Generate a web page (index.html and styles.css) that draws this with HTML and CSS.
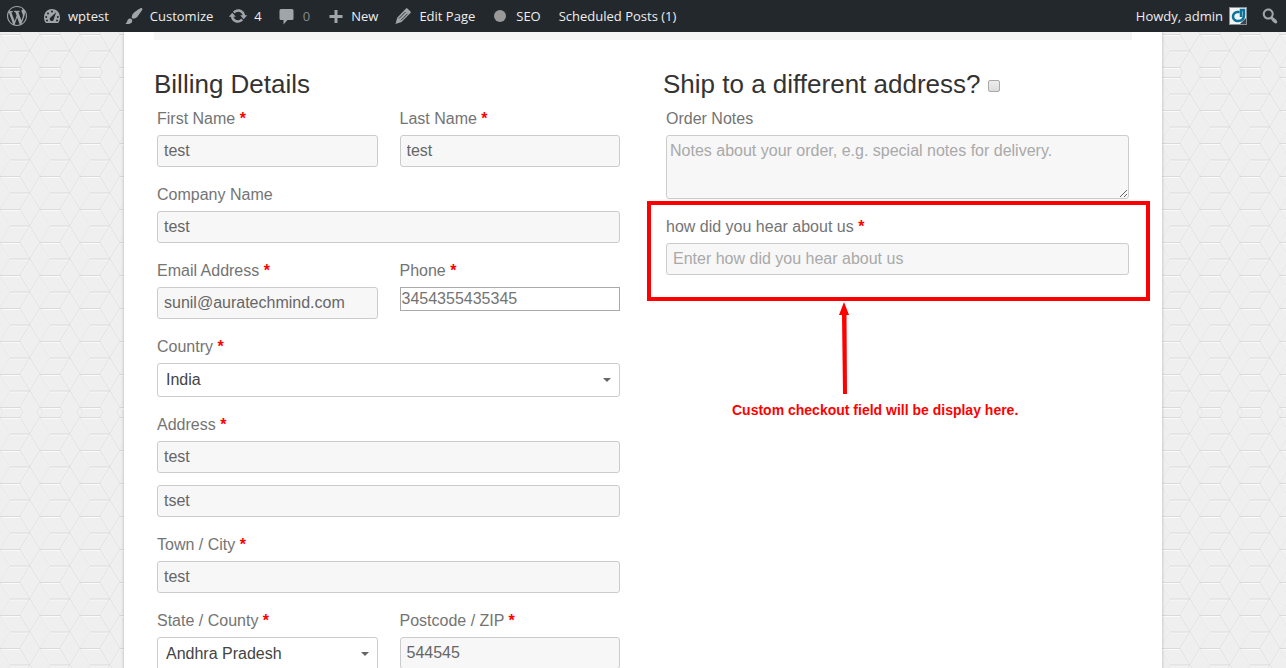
FILE: index.html
```html
<!DOCTYPE html>
<html lang="en">
<head>
<meta charset="utf-8">
<meta name="viewport" content="width=device-width, initial-scale=1">
<title>Checkout</title>
<link rel="stylesheet" href="styles.css">
</head>
<body>
<nav class="adminbar" aria-label="Toolbar">
  <a class="bar-item" href="#" aria-label="About WordPress">
    <svg class="icon" viewBox="0 0 20 20"><path d="M20 10c0-5.51-4.49-10-10-10C4.48 0 0 4.49 0 10c0 5.52 4.48 10 10 10 5.51 0 10-4.48 10-10zM7.78 15.37L4.37 6.22c.55-.02 1.17-.08 1.17-.08.5-.06.44-1.13-.06-1.11 0 0-1.45.11-2.37.11-.18 0-.37 0-.58-.01C4.12 2.69 6.87 1.11 10 1.11c2.33 0 4.45.87 6.05 2.34-.68-.11-1.65.39-1.65 1.58 0 .74.45 1.36.9 2.1.35.61.55 1.36.55 2.46 0 1.49-1.4 5-1.4 5l-3.03-8.37c.54-.02.82-.17.82-.17.5-.05.44-1.25-.06-1.22 0 0-1.44.12-2.38.12-.87 0-2.33-.12-2.33-.12-.5-.03-.56 1.2-.06 1.22l.92.08 1.26 3.41zM17.41 10c.24-.64.74-1.87.43-4.25.7 1.29 1.05 2.71 1.05 4.25 0 3.29-1.73 6.24-4.4 7.78.97-2.59 1.94-5.2 2.92-7.78zM6.1 18.09C3.12 16.65 1.11 13.53 1.11 10c0-1.3.23-2.48.72-3.59C3.25 10.3 4.67 14.2 6.1 18.09zm4.03-6.63l2.58 6.98c-.86.29-1.76.45-2.71.45-.79 0-1.57-.11-2.29-.33.81-2.38 1.62-4.74 2.42-7.1z"/></svg>
  </a>
  <a class="bar-item" href="#">
    <svg class="icon" viewBox="0 0 20 20"><path d="M3.8 17h12.4c1.1-1.5 1.8-3.3 1.8-5.3C18 6.9 14.900 3 10 3s-8 3.900-8 8.700c0 2 .7 3.800 1.800 5.300z"/><g class="cut"><circle cx="10" cy="5.500" r="1"/><circle cx="6" cy="7.500" r="1"/><circle cx="4.200" cy="11" r="1"/><circle cx="15.800" cy="11" r="1"/><circle cx="5" cy="14.500" r="1"/><circle cx="15" cy="14.500" r="1"/><path d="M14.200 6.200l-2.300 6.600a2.100 2.100 0 1 1-3.200-1.600z"/></g></svg>
    <span>wptest</span>
  </a>
  <a class="bar-item" href="#">
    <svg class="icon" viewBox="0 0 20 20"><path d="M18.330 3.570s.27-.8-.31-1.360c-.53-.52-1.220-.24-1.220-.24-.61.3-5.760 3.470-7.670 5.570-.86.96-2.060 3.790-1.090 4.820.92.98 3.960-.17 4.790-1 2.060-2.060 5.210-7.170 5.500-7.790zM1.400 17.650c2.370-1.560 1.460-3.410 3.230-4.640.93-.65 2.220-.62 3.080.29.63.67.8 2.570-.16 3.460-1.570 1.450-4 1.550-6.150.89z"/></svg>
    <span>Customize</span>
  </a>
  <a class="bar-item" href="#" aria-label="4 updates">
    <svg class="icon" viewBox="0 0 20 20"><path d="M10.200 3.280c3.530 0 6.430 2.610 6.920 6h2.080l-3.500 4-3.500-4h2.320c-.45-1.970-2.210-3.450-4.320-3.450-1.450 0-2.730.71-3.540 1.780L4.950 5.660C6.230 4.200 8.110 3.280 10.200 3.280zm-.4 13.440c-3.520 0-6.430-2.610-6.920-6H.8l3.500-4c1.170 1.330 2.330 2.670 3.500 4H5.480c.45 1.970 2.210 3.450 4.320 3.450 1.450 0 2.730-.71 3.540-1.780l1.710 1.950c-1.280 1.460-3.150 2.380-5.250 2.380z"/></svg>
    <span>4</span>
  </a>
  <a class="bar-item" href="#" aria-label="0 comments">
    <svg class="icon" viewBox="0 0 20 20"><path d="M4 3h11q1.500 0 1.500 1.500v8q0 1.500-1.500 1.500h-4.500L6.500 18.500V14H4q-1.500 0-1.500-1.500v-8Q2.500 3 4 3z"/></svg>
    <span class="muted">0</span>
  </a>
  <a class="bar-item" href="#">
    <svg class="icon" viewBox="0 0 20 20"><path d="M17.500 9v3h-5v5h-3v-5h-5V9h5V4h3v5z"/></svg>
    <span>New</span>
  </a>
  <a class="bar-item" href="#">
    <svg class="icon" viewBox="0 0 20 20"><path d="M14.500 2.500l3 3q.8.800 0 1.600l-9 9-6 1.900 1.700-6.200 8.800-9.300q.7-.700 1.500 0z"/><path d="M6 12.500l6.500-6.500M8 14.300l6.500-6.500" fill="none" stroke="#23282d" stroke-width=".9"/></svg>
    <span>Edit Page</span>
  </a>
  <a class="bar-item" href="#">
    <svg class="icon" viewBox="0 0 20 20"><circle cx="10" cy="10" r="6" fill="#999"/></svg>
    <span>SEO</span>
  </a>
  <a class="bar-item bar-text" href="#">Scheduled Posts (1)</a>
  <a class="bar-item bar-account" href="#">
    <span>Howdy, admin</span>
    <svg class="avatar" viewBox="0 0 18 18"><path d="M0 0h18v18H0z" fill="#8c8f94"/><path d="M1 1h16v16H1z" fill="#f1f3f5"/><path d="M17 11v6h-6z" fill="#3c4650"/><path d="M10.500 5H8a4.500 4.500 0 1 0 1 9c4 0 6-2 6-6V3h-3v7" fill="none" stroke="#0b7299" stroke-width="2.500"/></svg>
  </a>
  <a class="bar-item bar-search" href="#" aria-label="Search">
    <svg class="icon" viewBox="0 0 20 20"><path d="M12.140 4.180c1.870 1.870 2.110 4.750.72 6.890.12.1.22.21.36.31.2.16.47.36.81.59.34.24.56.39.66.47.42.31.73.57.94.78.32.32.6.65.84 1 .25.35.44.69.59 1.040.14.35.21.68.18 1-.02.32-.14.59-.36.81s-.49.34-.81.36c-.31.02-.65-.04-.99-.19-.35-.14-.7-.34-1.040-.59-.35-.24-.68-.52-1-.84-.21-.21-.47-.52-.77-.93-.1-.13-.25-.35-.47-.66-.22-.32-.4-.57-.56-.78-.16-.2-.29-.35-.44-.5-2.070 1.090-4.690.76-6.440-.98-2.140-2.150-2.140-5.640 0-7.780 2.150-2.150 5.630-2.150 7.780 0zm-1.410 6.360c1.360-1.370 1.360-3.580 0-4.950-1.370-1.370-3.590-1.370-4.950 0-1.370 1.370-1.370 3.580 0 4.950 1.360 1.370 3.580 1.370 4.950 0z"/></svg>
  </a>
</nav>

<main class="scroller">
  <form class="page">
    <div class="strip"></div>
    <div class="columns">
      <section class="column">
        <h3 class="heading">Billing Details</h3>
        <div class="fields">
          <div class="pair">
            <div class="field">
              <label for="first">First Name <b class="req">*</b></label>
              <input class="text" id="first" type="text" value="test">
            </div>
            <div class="field">
              <label for="last">Last Name <b class="req">*</b></label>
              <input class="text" id="last" type="text" value="test">
            </div>
          </div>
          <div class="field">
            <label for="company">Company Name</label>
            <input class="text" id="company" type="text" value="test">
          </div>
          <div class="pair">
            <div class="field">
              <label for="email">Email Address <b class="req">*</b></label>
              <input class="text" id="email" type="email" value="sunil@auratechmind.com">
            </div>
            <div class="field">
              <label for="phone">Phone <b class="req">*</b></label>
              <input class="tel" id="phone" type="tel" value="3454355435345">
            </div>
          </div>
          <div class="field">
            <label for="country">Country <b class="req">*</b></label>
            <select class="select" id="country"><option>India</option></select>
          </div>
          <div class="field">
            <label for="address">Address <b class="req">*</b></label>
            <input class="text" id="address" type="text" value="test">
            <input class="text second-line" type="text" aria-label="Address line 2" value="tset">
          </div>
          <div class="field">
            <label for="city">Town / City <b class="req">*</b></label>
            <input class="text" id="city" type="text" value="test">
          </div>
          <div class="pair">
            <div class="field">
              <label for="state">State / County <b class="req">*</b></label>
              <select class="select" id="state"><option>Andhra Pradesh</option></select>
            </div>
            <div class="field">
              <label for="zip">Postcode / ZIP <b class="req">*</b></label>
              <input class="text" id="zip" type="text" value="544545">
            </div>
          </div>
        </div>
      </section>

      <section class="column">
        <h3 class="heading">
          <label for="ship">Ship to a different address?</label>
          <input class="check" id="ship" type="checkbox">
        </h3>
        <div class="fields">
          <div class="field">
            <label for="notes">Order Notes</label>
            <textarea class="notes" id="notes" placeholder="Notes about your order, e.g. special notes for delivery."></textarea>
          </div>
          <div class="field highlighted">
            <label for="hear">how did you hear about us <b class="req">*</b></label>
            <input class="text" id="hear" type="text" placeholder="Enter how did you hear about us">
          </div>
        </div>
        <div class="callout">
          <svg class="arrow" viewBox="0 0 12 92"><path d="M6 0l5 13H8.500L9 92H5L4 13H1z" fill="#f00"/></svg>
          <p class="callout-text">Custom checkout field will be display here.</p>
        </div>
      </section>
    </div>
  </form>
</main>
</body>
</html>
```
FILE: styles.css
```css
* {
  box-sizing: border-box;
}

body {
  margin: 0;
  height: 100vh;
  display: flex;
  flex-direction: column;
  font-family: "Liberation Sans", Arial, sans-serif;
  font-size: 16px;
  line-height: 24px;
  color: #747474;
}

/* Admin toolbar */
.adminbar {
  flex: none;
  display: flex;
  height: 32px;
  background: #23282d;
  font-family: "Open Sans", sans-serif;
  font-size: 13px;
  line-height: 32px;
}

.bar-item {
  display: flex;
  align-items: center;
  gap: 6px;
  padding: 0 8px 0 7px;
  color: #eee;
  text-decoration: none;
  white-space: nowrap;
}

.bar-text {
  padding-left: 10px;
}

.bar-account {
  margin-left: auto;
  padding-right: 6px;
}

.bar-search {
  padding-right: 6px;
}

.icon {
  width: 20px;
  height: 20px;
  fill: #a0a5aa;
}

.icon .cut {
  fill: #23282d;
}

.avatar {
  width: 18px;
  height: 18px;
}

.muted {
  color: #85888b;
}

/* Page */
.scroller {
  flex: 1;
  min-height: 0;
  overflow-y: auto;
  scrollbar-width: none;
  background: #efefef url("data:image/svg+xml,%3Csvg xmlns='http://www.w3.org/2000/svg' width='40' height='340'%3E%3Cdefs%3E%3Cpattern id='p' y='5' width='40' height='33' patternUnits='userSpaceOnUse'%3E%3Cg fill='none'%3E%3Cpath d='M0 1.500H20M10 18H30' stroke='%23fafafa'/%3E%3Cpath d='M1 0L11 16.500M21 0L31 16.500L41 33M41 0L31 16.500L21 33' stroke='%23f4f4f4'/%3E%3Cpath d='M0 0L10 16.500L0 33' stroke='%23e9e9e9'/%3E%3Cpath d='M20 0L30 16.500L40 33M40 0L30 16.500L20 33' stroke='%23e2e2e2'/%3E%3Cpath d='M0 .5H20M10 17H30' stroke='%23dadada'/%3E%3C/g%3E%3C/pattern%3E%3C/defs%3E%3Crect width='40' height='340' fill='url(%23p)'/%3E%3C/svg%3E") 0 40px;
}

.page {
  max-width: 1038px;
  min-height: 100%;
  margin: 0 auto;
  padding: 0 30px;
  background: #fff;
  box-shadow: 0 0 3px rgba(0, 0, 0, 0.25);
}

.strip {
  height: 8px;
  background: #f5f5f5;
}

.columns {
  display: grid;
  grid-template-columns: 1fr 1fr;
  gap: 40px;
  padding-top: 28px;
}

.heading {
  display: flex;
  align-items: center;
  gap: 7px;
  margin: 0 0 7px;
  font-size: 26px;
  font-weight: 400;
  line-height: 32px;
  color: #333;
}

.fields {
  padding: 0 3px;
}

.pair {
  display: grid;
  grid-template-columns: 1fr 1fr;
  gap: 22px;
}

.field {
  display: flex;
  flex-direction: column;
  min-width: 0;
  margin-bottom: 16px;
}

.field label {
  margin-bottom: 4px;
}

.req {
  color: #f00;
}

.text,
.tel,
.select,
.notes {
  width: 100%;
  margin: 0;
  border: 1px solid #ccc;
  border-radius: 3px;
  background: #f7f7f7;
  color: #666;
  font: inherit;
}

.text {
  height: 32px;
  padding: 0 6px;
}

.second-line {
  margin-top: 12px;
}

.tel {
  height: 24px;
  padding: 0 1px;
  border-color: #a9a9a9;
  border-radius: 0;
  background: #fff;
  color: #747474;
}

.select {
  appearance: none;
  height: 34px;
  padding: 0 24px 0 8px;
  color: #444;
  background: #fff url("data:image/svg+xml,%3Csvg xmlns='http://www.w3.org/2000/svg' width='8' height='4'%3E%3Cpath d='M0 0h8L4 4z' fill='%23666'/%3E%3C/svg%3E") no-repeat right 8px center;
}

.notes {
  display: block;
  height: 64px;
  padding: 3px;
  resize: vertical;
}

.notes::placeholder,
.text::placeholder {
  color: #a9a9a9;
}

.check {
  appearance: none;
  width: 12px;
  height: 12px;
  margin: 4px 0 0;
  border: 1px solid #a9a9a9;
  border-radius: 2px;
  background: linear-gradient(#ededed, #dcdcdc);
}

/* Marker frame drawn over the custom field */
.highlighted {
  position: relative;
}

.highlighted::after {
  content: "";
  position: absolute;
  inset: -14px -21px -26px -19px;
  border: 4px solid #f00;
  pointer-events: none;
}

.callout {
  padding: 11px 0 0 69px;
}

.arrow {
  display: block;
  width: 12px;
  height: 92px;
  margin-left: 106px;
}

.callout-text {
  margin: 8px 0 0;
  font-size: 14px;
  font-weight: 700;
  line-height: 16px;
  color: #f00;
}
```
